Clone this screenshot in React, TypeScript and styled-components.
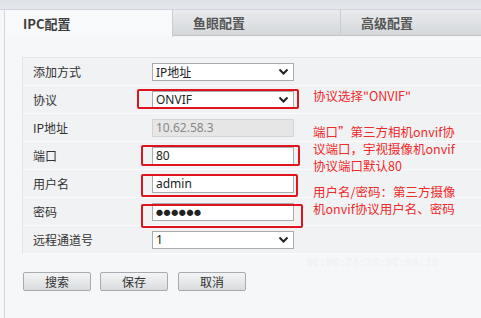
import { createGlobalStyle } from 'styled-components'
import styled from 'styled-components'

const GlobalStyle = createGlobalStyle`
  html, body {
    margin: 0;
    padding: 0;
    background: #f6f7f9;
  }
  body {
    font-family: 'Noto Sans CJK SC', 'Noto Sans', sans-serif;
    width: 481px;
    height: 318px;
    overflow: hidden;
  }
`

type Field = {
  label: string
  kind: 'select' | 'input' | 'disabled' | 'password'
  value: string
}

const FIELDS: Field[] = [
  { label: '添加方式', kind: 'select', value: 'IP地址' },
  { label: '协议', kind: 'select', value: 'ONVIF' },
  { label: 'IP地址', kind: 'disabled', value: '10.62.58.3' },
  { label: '端口', kind: 'input', value: '80' },
  { label: '用户名', kind: 'input', value: 'admin' },
  { label: '密码', kind: 'password', value: '●●●●●●' },
  { label: '远程通道号', kind: 'select', value: '1' }
]

const TABS = ['IPC配置', '鱼眼配置', '高级配置']

// red boxes drawn over the screenshot: left, top, width, height
const MARKS = [
  [137, 89, 162, 20],
  [141, 145, 159, 21],
  [141, 174, 157, 23],
  [141, 204, 162, 24]
]

function Chevron() {
  return (
    <svg width="11" height="8" viewBox="0 0 11 8">
      <path d="M1.5 1.5 L5.5 5.5 L9.5 1.5" fill="none" stroke="#222" strokeWidth="2" />
    </svg>
  )
}

export default function App() {
  return (
    <>
      <GlobalStyle />
      <Page>
        <TopStrip />
        <Frame>
          <TabBar>
            {TABS.map((t, i) => (
              <Tab key={t} $active={i === 0}>
                {t}
              </Tab>
            ))}
          </TabBar>

          <Content>
            <FormTable>
              {FIELDS.map(f => (
                <Row key={f.label}>
                  <Label>{f.label}</Label>
                  {f.kind === 'select' ? (
                    <SelectBox>
                      <span>{f.value}</span>
                      <Chevron />
                    </SelectBox>
                  ) : (
                    <InputBox $disabled={f.kind === 'disabled'} $password={f.kind === 'password'}>
                      {f.value}
                    </InputBox>
                  )}
                </Row>
              ))}
            </FormTable>

            <ButtonRow>
              <Button>搜索</Button>
              <Button>保存</Button>
              <Button>取消</Button>
            </ButtonRow>

            <Watermark>0C:D0:24:38:9C:9A:10</Watermark>

            {MARKS.map(([l, t, w, h]) => (
              <RedMark key={t} style={{ left: l - 5, top: t - 37, width: w, height: h }} />
            ))}

            <Note style={{ top: 50 }}>协议选择"ONVIF"</Note>
            <Note style={{ top: 86 }}>
              端口”第三方相机onvif协
              <br />
              议端口，宇视摄像机onvif
              <br />
              协议端口默认80
            </Note>
            <Note style={{ top: 146 }}>
              用户名/密码：第三方摄像
              <br />
              机onvif协议用户名、密码
            </Note>
          </Content>
        </Frame>
      </Page>
    </>
  )
}

const Page = styled.div`
  width: 481px;
  height: 318px;
  display: flex;
  flex-direction: column;
`

const TopStrip = styled.div`
  height: 9px;
  background: linear-gradient(#dde3e8, #e4e8ec);
  border-bottom: 1px solid #cfd5da;
`

const Frame = styled.div`
  flex: 1;
  margin-left: 4px;
  border-left: 1px solid #d3d6da;
  display: flex;
  flex-direction: column;
  background: #f6f7f9;
`

const TabBar = styled.div`
  height: 27px;
  display: flex;
  background: #f6f7f9;
`

const Tab = styled.div<{ $active?: boolean }>`
  width: 168px;
  box-sizing: border-box;
  padding-left: ${p => (p.$active ? '18px' : '20px')};
  display: flex;
  align-items: center;
  font-size: 13px;
  font-weight: 700;
  color: ${p => (p.$active ? '#3d3d3d' : '#555')};
  background: ${p => (p.$active ? '#f8f9fa' : 'linear-gradient(#e9ebed, #d5d8db)')};
  border-right: 1px solid #c9cdd1;
  border-bottom: ${p => (p.$active ? 'none' : '1px solid #bfc3c7')};
  height: ${p => (p.$active ? '27px' : '26px')};

  &:last-child {
    flex: 1;
    border-right: none;
  }
`

const Content = styled.div`
  position: relative;
  flex: 1;
  padding: 20px 0 0 17px;
  background: #f6f7f9;
`

const FormTable = styled.div`
  display: flex;
  flex-direction: column;
  background: #f1f2f4;
  border-top: 1px solid #e4e6e9;
  border-left: 1px solid #e4e6e9;
`

const Row = styled.div`
  height: 27px;
  display: flex;
  align-items: center;
  border-bottom: 1px solid #fbfbfc;
`

const Label = styled.div`
  width: 119px;
  padding-left: 10px;
  font-size: 12px;
  color: #333;
`

const fieldBase = `
  box-sizing: border-box;
  width: 142px;
  height: 18px;
  border: 1px solid #a9abae;
  display: flex;
  align-items: center;
  padding: 0 4px 0 3px;
  font-family: 'Noto Sans', 'Noto Sans CJK SC', sans-serif;
  font-size: 12px;
  color: #222;
`

const SelectBox = styled.div`
  ${fieldBase}
  justify-content: space-between;
  background: #fff;
`

const InputBox = styled.div<{ $disabled?: boolean; $password?: boolean }>`
  ${fieldBase}
  background: ${p => (p.$disabled ? '#e6e6e6' : '#fff')};
  border-color: ${p => (p.$disabled ? '#d4d4d4' : '#a9abae')};
  color: ${p => (p.$disabled ? '#888' : '#222')};
  font-size: ${p => (p.$password ? '7px' : '12px')};
  letter-spacing: ${p => (p.$password ? '0.6px' : '0')};
`

const ButtonRow = styled.div`
  display: flex;
  gap: 9px;
  margin-top: 18px;
  padding-left: 1px;
`

const Button = styled.div`
  width: 68px;
  height: 19px;
  box-sizing: border-box;
  border: 1px solid #a8abae;
  border-radius: 2px;
  background: linear-gradient(#f3f4f5, #d9dcdf);
  display: flex;
  align-items: center;
  justify-content: center;
  font-size: 12px;
  color: #333;

  &:nth-child(3) {
    margin-left: 1px;
  }
`

const Watermark = styled.div`
  position: absolute;
  left: 301px;
  top: 219px;
  font-family: 'DejaVu Sans Mono', monospace;
  font-size: 11px;
  font-weight: 700;
  color: #f0f2f4;
  white-space: nowrap;
`

const RedMark = styled.div`
  position: absolute;
  box-sizing: border-box;
  border: 2px solid #e0141c;
  border-radius: 2px;
`

const Note = styled.div`
  position: absolute;
  left: 308px;
  font-size: 12.5px;
  line-height: 17px;
  color: #ef2a2a;
  white-space: nowrap;
`
